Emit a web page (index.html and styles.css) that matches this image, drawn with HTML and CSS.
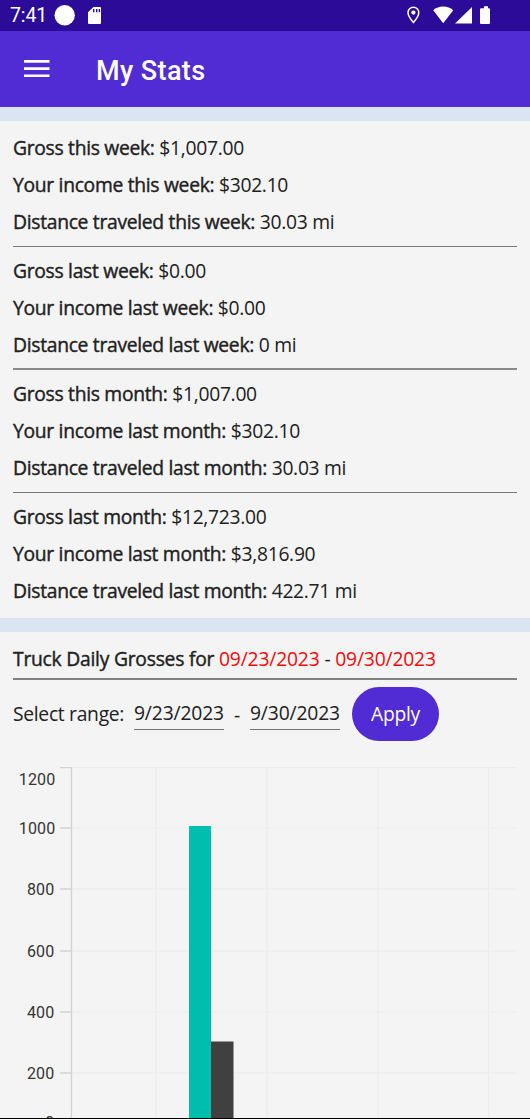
FILE: index.html
```html
<!DOCTYPE html>
<html lang="en">
<head>
<meta charset="utf-8">
<title>My Stats</title>
<link rel="stylesheet" href="styles.css">
</head>
<body>
<div class="screen">
  <header class="status-bar">
    <span class="clock">7:41</span>
    <svg class="status-left" width="50" height="31" viewBox="0 0 50 31" fill="#fff">
      <circle cx="10.7" cy="15.3" r="10.2"/>
      <path fill-rule="evenodd" d="M39.5 7H46a1 1 0 0 1 1 1v15a1 1 0 0 1-1 1H35a1 1 0 0 1-1-1V12.2zM39 9v3.2h1.4V9zM42 9v3.2h1.4V9zM44.700 9v3.2h1.4V9z"/>
    </svg>
    <svg class="status-right" width="86" height="31" viewBox="0 0 86 31" fill="#fff">
      <path d="M7.4 7.2a5.4 5.4 0 0 0-5.4 5.4c0 3.9 5.4 10 5.4 10s5.4-6.1 5.4-10a5.4 5.4 0 0 0-5.4-5.4z" fill="none" stroke="#fff" stroke-width="1.5"/>
      <circle cx="7.4" cy="12.6" r="2.1"/>
      <path d="M27.200 10.200C32.500 5.300 42 5.300 47.200 10.200L37.200 23.200z"/>
      <path d="M66 7v16.400H49z"/>
      <path d="M76 8.200h2V6.300h4v1.900h1a1 1 0 0 1 1 1V23a1 1 0 0 1-1 1h-8a1 1 0 0 1-1-1V9.200a1 1 0 0 1 1-1z"/>
    </svg>
  </header>

  <div class="app-bar">
    <svg class="menu-icon" width="26" height="18" viewBox="0 0 26 18" fill="#fff">
      <path d="M0 0h25.500v2.700H0zM0 7.200h25.500v2.700H0zM0 14.400h25.500v2.700H0z"/>
    </svg>
    <h1 class="app-title">My Stats</h1>
  </div>

  <main class="content">
    <section class="card summary">
      <div class="group">
        <p class="row"><b class="label">Gross this week:</b> $1,007.00</p>
        <p class="row"><b class="label">Your income this week:</b> $302.10</p>
        <p class="row"><b class="label">Distance traveled this week:</b> 30.03 mi</p>
      </div>
      <div class="group">
        <p class="row"><b class="label">Gross last week:</b> $0.00</p>
        <p class="row"><b class="label">Your income last week:</b> $0.00</p>
        <p class="row"><b class="label">Distance traveled last week:</b> 0 mi</p>
      </div>
      <div class="group group-month">
        <p class="row"><b class="label">Gross this month:</b> $1,007.00</p>
        <p class="row"><b class="label">Your income last month:</b> $302.10</p>
        <p class="row"><b class="label">Distance traveled last month:</b> 30.03 mi</p>
      </div>
      <div class="group">
        <p class="row"><b class="label">Gross last month:</b> $12,723.00</p>
        <p class="row"><b class="label">Your income last month:</b> $3,816.90</p>
        <p class="row"><b class="label">Distance traveled last month:</b> 422.71 mi</p>
      </div>
    </section>

    <section class="card daily">
      <h2 class="daily-title"><b class="label">Truck Daily Grosses for</b> <span class="date">09/23/2023</span> - <span class="date">09/30/2023</span></h2>
      <div class="range">
        <span class="range-label">Select range:</span>
        <span class="field">9/23/2023</span>
        <span class="dash">-</span>
        <span class="field">9/30/2023</span>
        <button class="apply">Apply</button>
      </div>
      <svg class="chart" width="530" height="351" viewBox="0 767 530 351">
        <g class="grid">
          <path d="M72 767.500H517M72 828H517M72 889H517M72 951H517M72 1012H517M72 1073H517"/>
          <path d="M156 767V1118M267 767V1118M378 767V1118M488.500 767V1118"/>
        </g>
        <g class="axis">
          <path d="M71.500 767V1118"/>
          <path d="M60 767.500H72M60 828H72M60 889H72M60 951H72M60 1012H72M60 1073H72"/>
        </g>
        <rect class="bar-gross" x="189" y="826" width="22" height="292"/>
        <rect class="bar-income" x="211" y="1041.500" width="22.500" height="77"/>
        <g class="ticks">
          <text x="55.500" y="785">1200</text>
          <text x="55.500" y="834">1000</text>
          <text x="54.500" y="895">800</text>
          <text x="54.500" y="956.500">600</text>
          <text x="54.500" y="1017.500">400</text>
          <text x="54.500" y="1078.500">200</text>
          <text x="54.500" y="1127.500">0</text>
        </g>
      </svg>
    </section>
  </main>
</div>
</body>
</html>
```
FILE: styles.css
```css
* {
  box-sizing: border-box;
}

body {
  margin: 0;
}

.screen {
  display: flex;
  flex-direction: column;
  width: 530px;
  height: 1119px;
  overflow: hidden;
  background: #f4f4f4;
  border-bottom: 1px solid #000;
  color: #212121;
  font-family: "Open Sans", sans-serif;
  font-size: 19.3px;
  letter-spacing: -0.3px;
}

.status-bar {
  display: flex;
  flex: none;
  align-items: center;
  height: 31px;
  padding: 0 38px 0 10px;
  background: #2b0b98;
  color: #fff;
}

.clock {
  width: 44px;
  font: 19.5px/31px Roboto, sans-serif;
  letter-spacing: -0.1px;
}

.status-right {
  margin-left: auto;
}

.app-bar {
  display: flex;
  flex: none;
  align-items: center;
  gap: 46px;
  height: 76px;
  padding: 0 24px 0 24px;
  background: #512bd4;
  color: #fff;
}

.menu-icon {
  margin-top: -1px;
}

.app-title {
  margin: 3px 0 0;
  font: 500 27px/36px Roboto, sans-serif;
  letter-spacing: 0.4px;
}

.content {
  flex: none;
  background: #dae4f3;
}

.card {
  margin-top: 14px;
  background: #f4f4f4;
}

.summary {
  height: 497px;
  padding: 8px 13px 0;
}

.group + .group {
  margin-top: 6px;
  border-top: 1px solid #777;
  padding-top: 5px;
}

.group + .group-month {
  margin-top: 5px;
  border-top: 2px solid #8a8a8a;
}

.row {
  height: 37px;
  margin: 0;
  line-height: 37px;
  white-space: nowrap;
}

.label {
  font-weight: 400;
  -webkit-text-stroke: 0.400px currentColor;
}

.daily-title {
  height: 48px;
  margin: 0 13px;
  border-bottom: 2px solid #808080;
  font-size: 19.300px;
  font-weight: 400;
  letter-spacing: -0.180px;
  line-height: 53px;
  white-space: nowrap;
}

.daily-title .label {
  letter-spacing: -0.240px;
}

.date {
  color: #f00c0c;
}

.range {
  display: flex;
  align-items: center;
  height: 68px;
  padding-left: 13px;
}

.range-label {
  width: 121px;
  padding-bottom: 2px;
}

.field {
  width: 90px;
  height: 32px;
  border-bottom: 1px solid #757575;
  letter-spacing: -0.160px;
  line-height: 30px;
}

.dash {
  width: 26px;
  text-align: center;
}

.apply {
  width: 87px;
  height: 54px;
  margin-left: 12px;
  padding: 0 0 2px;
  border: 0;
  border-radius: 27px;
  background: #512bd4;
  color: #fff;
  font: inherit;
  letter-spacing: inherit;
}

.chart {
  display: block;
  margin-top: 19px;
}

.grid path {
  fill: none;
  stroke: #ededee;
  stroke-width: 1.500;
}

.axis path {
  fill: none;
  stroke: #d0d3d6;
  stroke-width: 1.300;
}

.bar-gross {
  fill: #00bdae;
}

.bar-income {
  fill: #404041;
}

.ticks text {
  fill: #353535;
  font-family: Roboto, sans-serif;
  font-size: 16px;
  letter-spacing: 0.200px;
  text-anchor: end;
}
```
